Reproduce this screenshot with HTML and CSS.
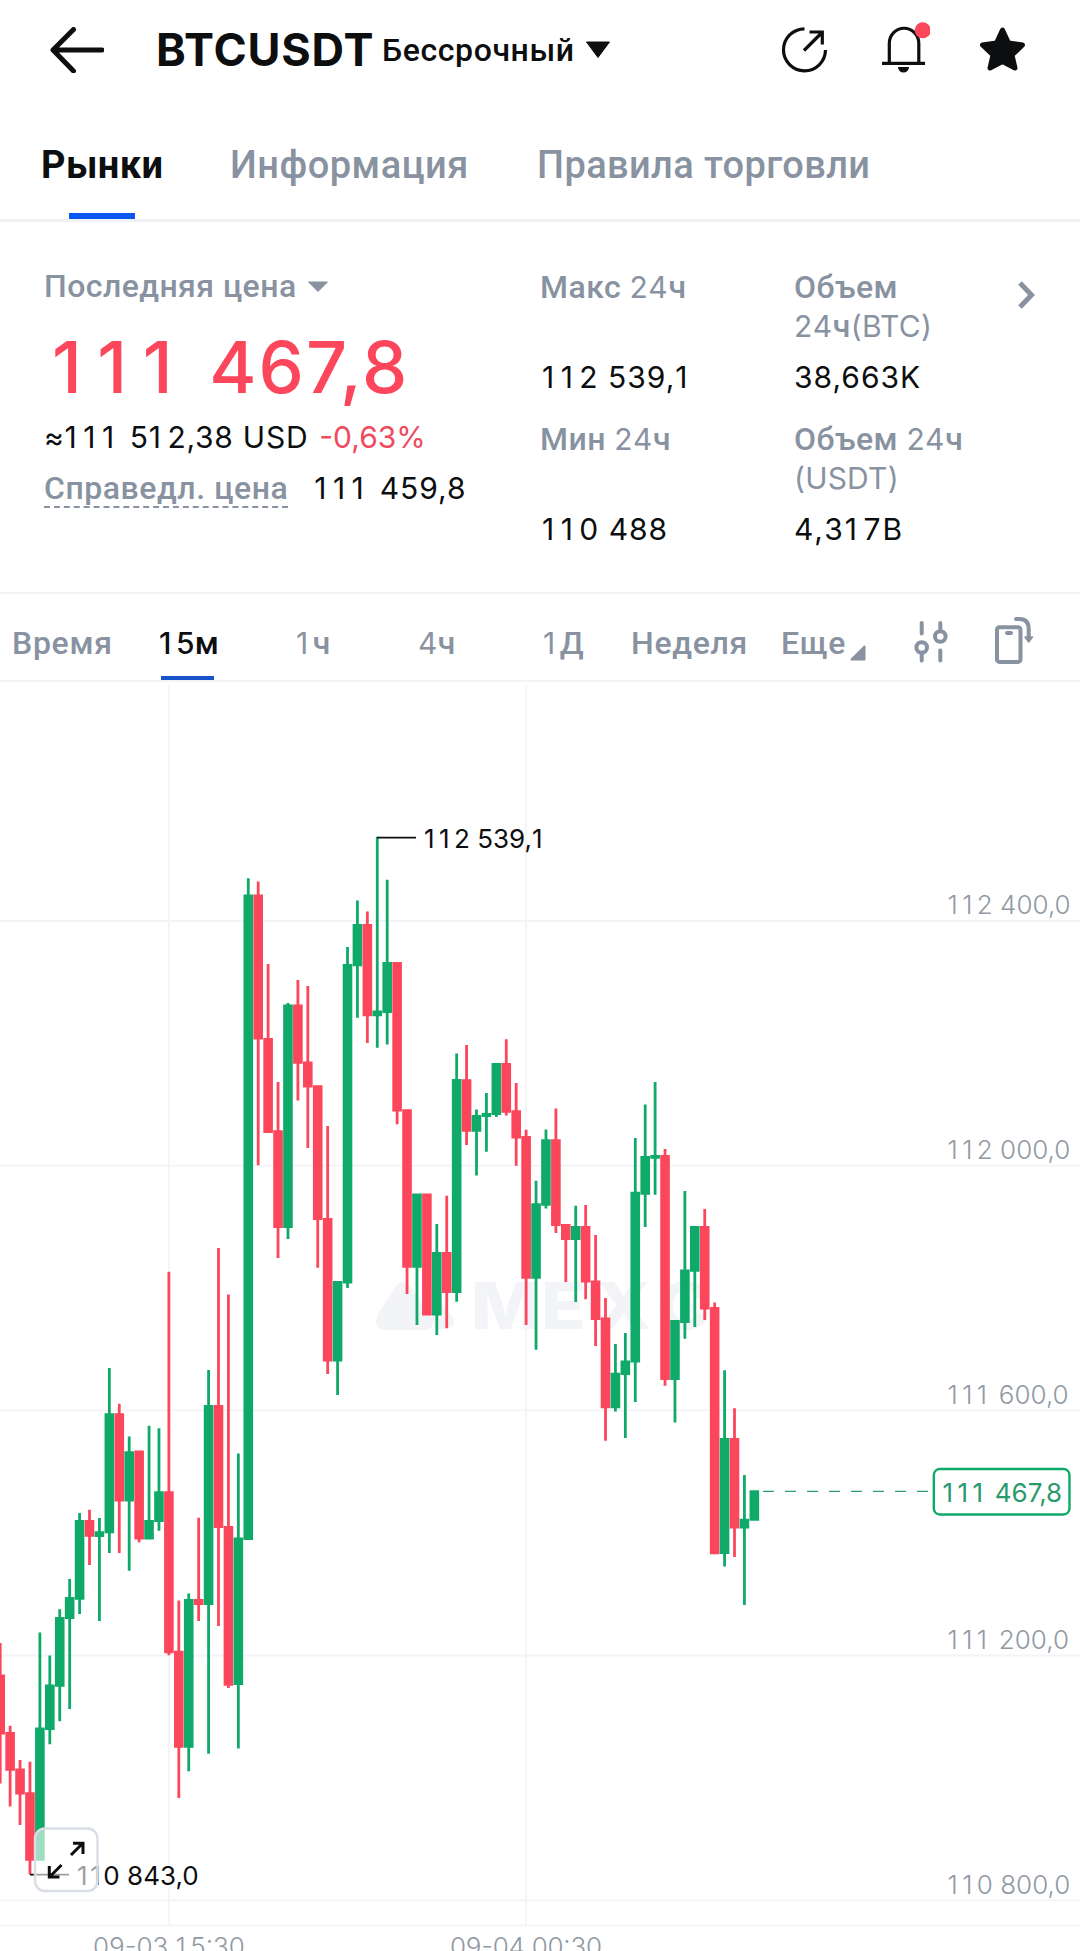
FILE: index.html
```html
<!DOCTYPE html>
<html lang="ru">
<head>
<meta charset="utf-8">
<title>BTCUSDT Бессрочный</title>
<link rel="stylesheet" href="styles.css">
</head>
<body>
<header class="topbar">
  <svg class="back" width="54" height="46" viewBox="49.500 26 54 46"><path d="M73 28.500 52.500 49 73 70M53 49H101.500" fill="none" stroke="#0c0e10" stroke-width="5" stroke-linecap="round" stroke-linejoin="round"/></svg>
  <h1 class="pair">BTCUSDT</h1>
  <span class="kind">Бессрочный</span>
  <svg class="caret" width="26" height="18" viewBox="0 0 26 18"><path d="M1.500 1H24.500L13 16.500Z" fill="#0c0e10" stroke="#0c0e10" stroke-linejoin="round"/></svg>
  <div class="actions">
    <svg width="48" height="56" viewBox="780 21 48 56" fill="none" stroke="#0c0e10" stroke-width="3.200"><path d="M804.500 27.800A21 21 0 1 0 825.500 49M804 49.500 822 31.500M809.500 31H822.300V43.500"/></svg>
    <svg width="52" height="56" viewBox="878 21 52 56"><path d="M889.300 62V42.500a14.500 15 0 0 1 29.500 0V62M882 62.400H925" fill="none" stroke="#0c0e10" stroke-width="3.200"/><path d="M898 66H909A5.500 5.500 0 0 1 898 66Z" fill="#0c0e10"/><circle cx="922.700" cy="29.300" r="8" fill="#fc465c"/></svg>
    <svg width="48" height="56" viewBox="980 21 48 56"><path d="M1002.500 29 1008.500 42 1022.500 44 1012 54 1015 67 1002.500 60.500 990 67 993 54 982.500 44 996.500 42Z" fill="#0c0e10" stroke="#0c0e10" stroke-width="5" stroke-linejoin="round"/></svg>
  </div>
</header>
<nav class="sections">
  <a class="section active">Рынки</a><a class="section info">Информация</a><a class="section rules">Правила торговли</a>
</nav>
<section class="summary">
  <div class="price">
    <div class="label last">Последняя цена <svg width="22" height="12" viewBox="0 0 22 12"><path d="M1.500 1H20.500L11 10.500Z" fill="#8892a0" stroke="#8892a0" stroke-linejoin="round"/></svg></div>
    <div class="big"><b>111</b> 467,8</div>
    <div class="usd num"><span class="usd-value">≈<b>111</b> 5<b>1</b>2,38 USD</span><span class="change">-0,63%</span></div>
    <div class="fair"><span class="label dashed">Справедл. цена</span><span class="num fair-value"><b>111</b> 459,8</span></div>
  </div>
  <dl class="stats">
    <div class="stat"><dt>Макс <i>24</i>ч</dt><dd class="inset"><b>11</b>2 539,<b>1</b></dd></div>
    <div class="stat"><dt>Объем<br><i>24</i>ч<i class="unit">(BTC)</i></dt><dd>38,663K</dd></div>
    <div class="stat"><dt>Мин <i>24</i>ч</dt><dd class="inset"><b>11</b>0 488</dd></div>
    <div class="stat"><dt>Объем <i>24</i>ч<br><i class="unit">(USDT)</i></dt><dd class="turnover">4,3<b>1</b>7B</dd></div>
  </dl>
  <svg class="more" width="20" height="30" viewBox="0 0 20 30"><path d="M3 3 14.500 15 3 27" fill="none" stroke="#8892a0" stroke-width="5"/></svg>
</section>
<nav class="intervals">
  <a>Время</a><a class="active"><i><b>1</b>5</i>м</a><a><i><b>1</b></i>ч</a><a><i>4</i>ч</a><a><i><b>1</b></i>Д</a><a>Неделя</a><a class="drop">Еще<svg width="16" height="16" viewBox="0 0 16 16"><path d="M1.500 14.500 14.500 1.500V14.500Z" fill="#8892a0" stroke="#8892a0" stroke-width="2" stroke-linejoin="round"/></svg></a>
  <svg width="38" height="50" viewBox="912 617 38 50" fill="none" stroke="#8892a0" stroke-width="4" stroke-linecap="round"><path d="M921.700 623V633.500M921.700 655V660.500M940.300 623V629M940.300 650.500V660.500"/><circle cx="921.700" cy="647.500" r="5.300"/><circle cx="940.300" cy="636.500" r="5.300"/></svg>
  <svg width="42" height="50" viewBox="992 617 42 50" fill="none" stroke="#8892a0" stroke-width="4" stroke-linecap="round"><rect x="996" y="627.200" width="23.500" height="34.700" rx="2.500"/><path d="M1006 633H1010M1015 619H1018.500Q1027.700 619 1027.700 629V636"/><path d="M1024 637H1031.500L1027.700 642Z" fill="#8892a0" stroke-width="1.500" stroke-linejoin="round"/></svg>
</nav>
<main class="chart">
  <svg id="plot" width="1080" height="1269" viewBox="0 682 1080 1269">
    <path class="grid" d="M0 921H1080M0 1165.700H1080M0 1410.300H1080M0 1655.500H1080M0 1900.300H1080M0 1925.300H1080M169 685V1925M526 685V1925"/>
    <g class="mark">
      <path d="M396 1286Q402 1278 410 1286L431 1318Q436 1329 425 1330H386Q372 1329 378 1314Z"/>
      <path d="M424 1289Q430 1289 434 1295L452 1316Q458 1327 446 1329H436L424 1308Z"/>
      <text transform="scale(1.12 1)" x="420.500 483 532 587" y="1329">MEXC</text>
    </g>
    <g id="candles"></g>
    <path d="M377 837.600H416M30 1874.600H69" stroke="#0c0e10" stroke-width="1.700"/>
    <text class="extreme" x="424" y="848"><tspan class="one">11</tspan>2 539,<tspan class="one">1</tspan></text>
    <text class="extreme low" x="77" y="1885"><tspan class="one">11</tspan>0 843,0</text>
    <g class="axis">
      <text x="947.500" y="913.500"><tspan class="one">11</tspan>2 400,0</text>
      <text x="947.500" y="1158.500"><tspan class="one">11</tspan>2 000,0</text>
      <text x="947.500" y="1404"><tspan class="one">111</tspan> 600,0</text>
      <text x="947.500" y="1649"><tspan class="one">111</tspan> 200,0</text>
      <text x="947.500" y="1893.500"><tspan class="one">11</tspan>0 800,0</text>
      <text x="93" y="1956">09-03 <tspan class="one">1</tspan>5:30</text>
      <text x="450" y="1956" textLength="152">09-04 00:30</text>
    </g>
    <path d="M763 1491.400H930" stroke="#2f9d70" stroke-width="1.300" stroke-dasharray="11 11"/>
    <rect x="933.800" y="1469" width="135.700" height="45.500" rx="6" fill="#fff" stroke="#0faa6a" stroke-width="2.400"/>
    <text class="now" x="942.500" y="1502"><tspan class="one">111</tspan> 467,8</text>
    <rect x="35" y="1828.500" width="62.500" height="62.500" rx="10" fill="#fff" fill-opacity=".6" stroke="#d9dde6" stroke-width="2.400"/>
    <path d="M71 1855 83 1843M73 1843.300H83V1854M61.500 1865 49.500 1877M49.300 1866V1877H59.500" fill="none" stroke="#0c0e10" stroke-width="3"/>
  </svg>
</main>
<script src="chart.js"></script>
</body>
</html>
```
FILE: styles.css
```css
body { margin: 0; width: 1080px; height: 1951px; overflow: hidden; background: #fff; color: #0c0e10; font-family: Roboto, "Noto Sans", sans-serif; }
i, .num, dd, .pair, .big { font-family: Inter, sans-serif; font-style: normal; }
svg { display: block; flex: none; }
/* Spreads the narrow digit one to the width of the other figures. */
b { font-weight: inherit; letter-spacing: .215em; font-kerning: none; }
.topbar { display: flex; align-items: center; height: 99px; padding-left: 50px; }
.pair { margin: 0 0 0 52px; width: 226px; font-size: 45px; font-weight: 650; letter-spacing: .8px; line-height: 98px; white-space: nowrap; }
.kind { width: 202px; font-size: 32px; font-weight: 500; letter-spacing: .6px; white-space: nowrap; }
.caret { margin-left: 1px; }
.actions { display: flex; gap: 50px; margin-left: 169px; }
.sections { display: flex; height: 120px; border-bottom: 3px solid #f1f2f5; padding-left: 40px; font-size: 38px; font-weight: 500; color: #8892a0; line-height: 133px; letter-spacing: .4px; white-space: nowrap; }
.section.active { position: relative; width: 190px; color: #0c0e10; font-weight: 700; text-indent: 1px; }
.section.active::after { content: ""; position: absolute; left: 29px; bottom: 0; width: 66px; height: 6px; background: #0757f0; }
.section.info { width: 307px; letter-spacing: .5px; }
.summary { display: flex; height: 370px; border-bottom: 2px solid #f3f4f7; }
.price { width: 496px; padding: 45px 0 0 44px; white-space: nowrap; }
.label, dt { font-size: 32px; font-weight: 500; line-height: 39px; color: #8892a0; letter-spacing: .45px; }
.last { display: flex; align-items: center; gap: 10px; }
.big { margin-top: 17px; padding-left: 8px; font-size: 72px; line-height: 88px; font-weight: 480; letter-spacing: 2px; color: #fc465c; }
.usd { display: flex; gap: 11px; height: 51px; line-height: 53px; font-size: 30px; letter-spacing: .75px; }
.change { color: #f04a60; letter-spacing: 0; }
.fair { display: flex; align-items: center; gap: 26px; height: 52px; }
.dashed { height: 37px; border-bottom: 2px dashed #8892a0; letter-spacing: .55px; }
.fair-value, dd { font-size: 30px; letter-spacing: 1px; }
.stats { display: grid; grid-template-columns: 254px 220px; grid-auto-rows: 152px; margin: 0; padding-top: 46px; white-space: nowrap; }
.stat { display: flex; flex-direction: column; height: 152px; }
dt { height: 91px; }
dt i { font-size: 30px; font-weight: 400; letter-spacing: .8px; }
dt .unit { letter-spacing: .2px; }
dd { margin: 0; line-height: 36px; }
.inset { padding-left: 2px; }
.turnover { letter-spacing: 2px; }
.more { margin: 58px 0 0 3px; }
.intervals { display: grid; grid-template-columns: 147px 137px 122px 125px 88px 150px 131px 81px 42px; align-items: center; height: 86px; border-bottom: 2px solid #f3f4f7; padding-left: 12px; color: #8892a0; font-size: 32px; font-weight: 500; line-height: 98px; letter-spacing: .7px; white-space: nowrap; }
.intervals a { height: 86px; }
.intervals i { font-size: 30px; font-weight: 400; letter-spacing: .3px; }
.intervals b { letter-spacing: .15em; }
.intervals .active { position: relative; color: #0c0e10; }
.intervals .active i { font-weight: 500; }
.intervals .active::after { content: ""; position: absolute; left: 2px; bottom: 0; width: 53px; height: 4px; background: #1652cc; }
.intervals svg { margin-top: 9px; }
.drop { display: flex; gap: 4px; }
.intervals .drop svg { margin-top: 51px; }
.grid { stroke: #f3f4f7; stroke-width: 1.800; }
.mark { fill: #f3f4f7; }
#plot .mark text { font-size: 65px; font-weight: 800; }
#plot text { font-family: Inter, sans-serif; font-size: 26px; }
.one { letter-spacing: .17em; font-kerning: none; }
#plot .extreme { fill: #0c0e10; }
.low .one { letter-spacing: .1em; }
.axis { fill: #9199a3; }
#plot .axis text { font-weight: 300; }
.now { fill: #2a9a6c; }
.rise { fill: #0faa6a; }
.fall { fill: #fc465c; }
```
FILE: chart.js
```js
// Candles, left to right: [rising, high, bodyTop, bodyBottom, low] in chart units.
const candles = [
[0,1642.9,1674.6,1734.4,1783.5],[0,1725.7,1732,1770.8,1806.4],[0,1760.1,1768.4,1794.6,1825],[0,1761.7,1792.2,1860.7,1874.6],
[1,1632.6,1727.6,1860.7,1860.7],[1,1655.6,1684.5,1730,1744.3],[1,1609.2,1617.1,1686.8,1721.3],[1,1579.1,1596.9,1619.1,1709],
[1,1513,1520.1,1599.7,1614],[0,1509.8,1520.1,1536.7,1564.9],[1,1518.1,1531.2,1537.1,1621.1],[1,1368,1413.2,1533.2,1553],
[0,1403.7,1413.2,1501.5,1553],[1,1436.5,1451.2,1501.5,1570.8],[0,1450.4,1450.4,1539.5,1542.3],[1,1425.8,1520.1,1539.5,1539.5],
[1,1428.2,1491.2,1522.1,1530.8],[0,1271.7,1491.2,1653.2,1655.2],[0,1600.5,1650.8,1747.8,1798.1],[1,1593.4,1598.9,1747.8,1771.2],
[0,1517.7,1598.9,1604.9,1621.1],[1,1370,1404.9,1604.9,1753.8],[0,1247.9,1404.9,1528,1625.9],[0,1294.5,1526,1685.7,1688],
[1,1453.6,1537.5,1684.9,1748.6],[1,878.2,894.6,1539.9,1539.9],[0,881.6,894.6,1039.6,1165.2],[0,963.9,1038.1,1133,1133],
[0,1082.1,1130.3,1227.9,1258.1],[1,1002.9,1004.4,1227.9,1239],[0,979.9,1004.4,1063.7,1100.5],[0,986.1,1061.5,1087.5,1147.9],
[0,1085.2,1085.2,1219.9,1267.7],[0,1126.1,1218,1361.5,1374.1],[1,1281.1,1281.1,1361.5,1395.1],[1,947,963.9,1283.4,1288],
[1,900.4,924.1,966.2,1017.8],[0,911.5,924.1,1016.3,1043.1],[1,836.8,1010.6,1016.3,1047.7],[1,879.7,962,1012.9,1044.6],
[0,962,962,1111.6,1124.2],[0,1109.3,1109.3,1267.7,1294.1],[1,1193.5,1193.5,1267.7,1325.1],[0,1193.5,1193.5,1315.5,1315.5],
[1,1224.1,1252,1315.5,1335.1],[0,1195.8,1252,1293,1328.2],[1,1053.4,1079.1,1293,1301.8],[0,1044.9,1079.2,1131.8,1144.9],
[1,1109.4,1115.1,1131.8,1175.5],[1,1093.1,1113.1,1117.1,1151.8],[1,1062.9,1062.9,1115.1,1117.1],[0,1039.2,1062.9,1112.7,1115.5],
[0,1082.9,1110.2,1138.4,1165.7],[0,1129.8,1135.9,1278.8,1324.9],[1,1180.8,1203.3,1278.8,1349.8],[1,1129.4,1139.2,1205.7,1208.6],
[0,1108.6,1139.2,1226.1,1233.1],[0,1224.1,1224.1,1240,1282],[1,1205.7,1226.1,1240,1302],[0,1204.9,1226.1,1282.4,1299.2],
[0,1235.1,1280.4,1320,1346.1],[0,1298,1317.5,1408.2,1440.8],[1,1344.1,1372.7,1408.2,1411.4],[1,1333.1,1360.4,1375.1,1438],
[1,1138,1191.8,1362.4,1402],[1,1104.5,1155.9,1194.7,1226.9],[1,1082,1155.1,1158.8,1194.7],[0,1149,1155.1,1380,1385.7],
[1,1320,1320,1380,1422.4],[1,1191,1269.4,1322.9,1338.8],[1,1226.1,1226.1,1271.8,1326.9],[0,1209,1226.1,1309.4,1320],
[0,1302.4,1306.9,1554.3,1554.3],[1,1370.2,1438,1553.9,1566.5],[0,1408.2,1438,1528.6,1557.1],[1,1475.1,1518.8,1528.6,1604.9],
[1,1490.2,1490.2,1520.8,1520.8]
];
const STEP = 9.923;
document.getElementById('candles').innerHTML = candles.map(([up, high, top, bottom, low], i) => {
  const x = 0.2 + i * STEP;
  return `<path class="${up ? 'rise' : 'fall'}" d="M${x - 4.8} ${top}h9.6V${bottom}h-9.6ZM${x - 1.4} ${high}h2.8V${low}h-2.8Z"/>`;
}).join('');
```
